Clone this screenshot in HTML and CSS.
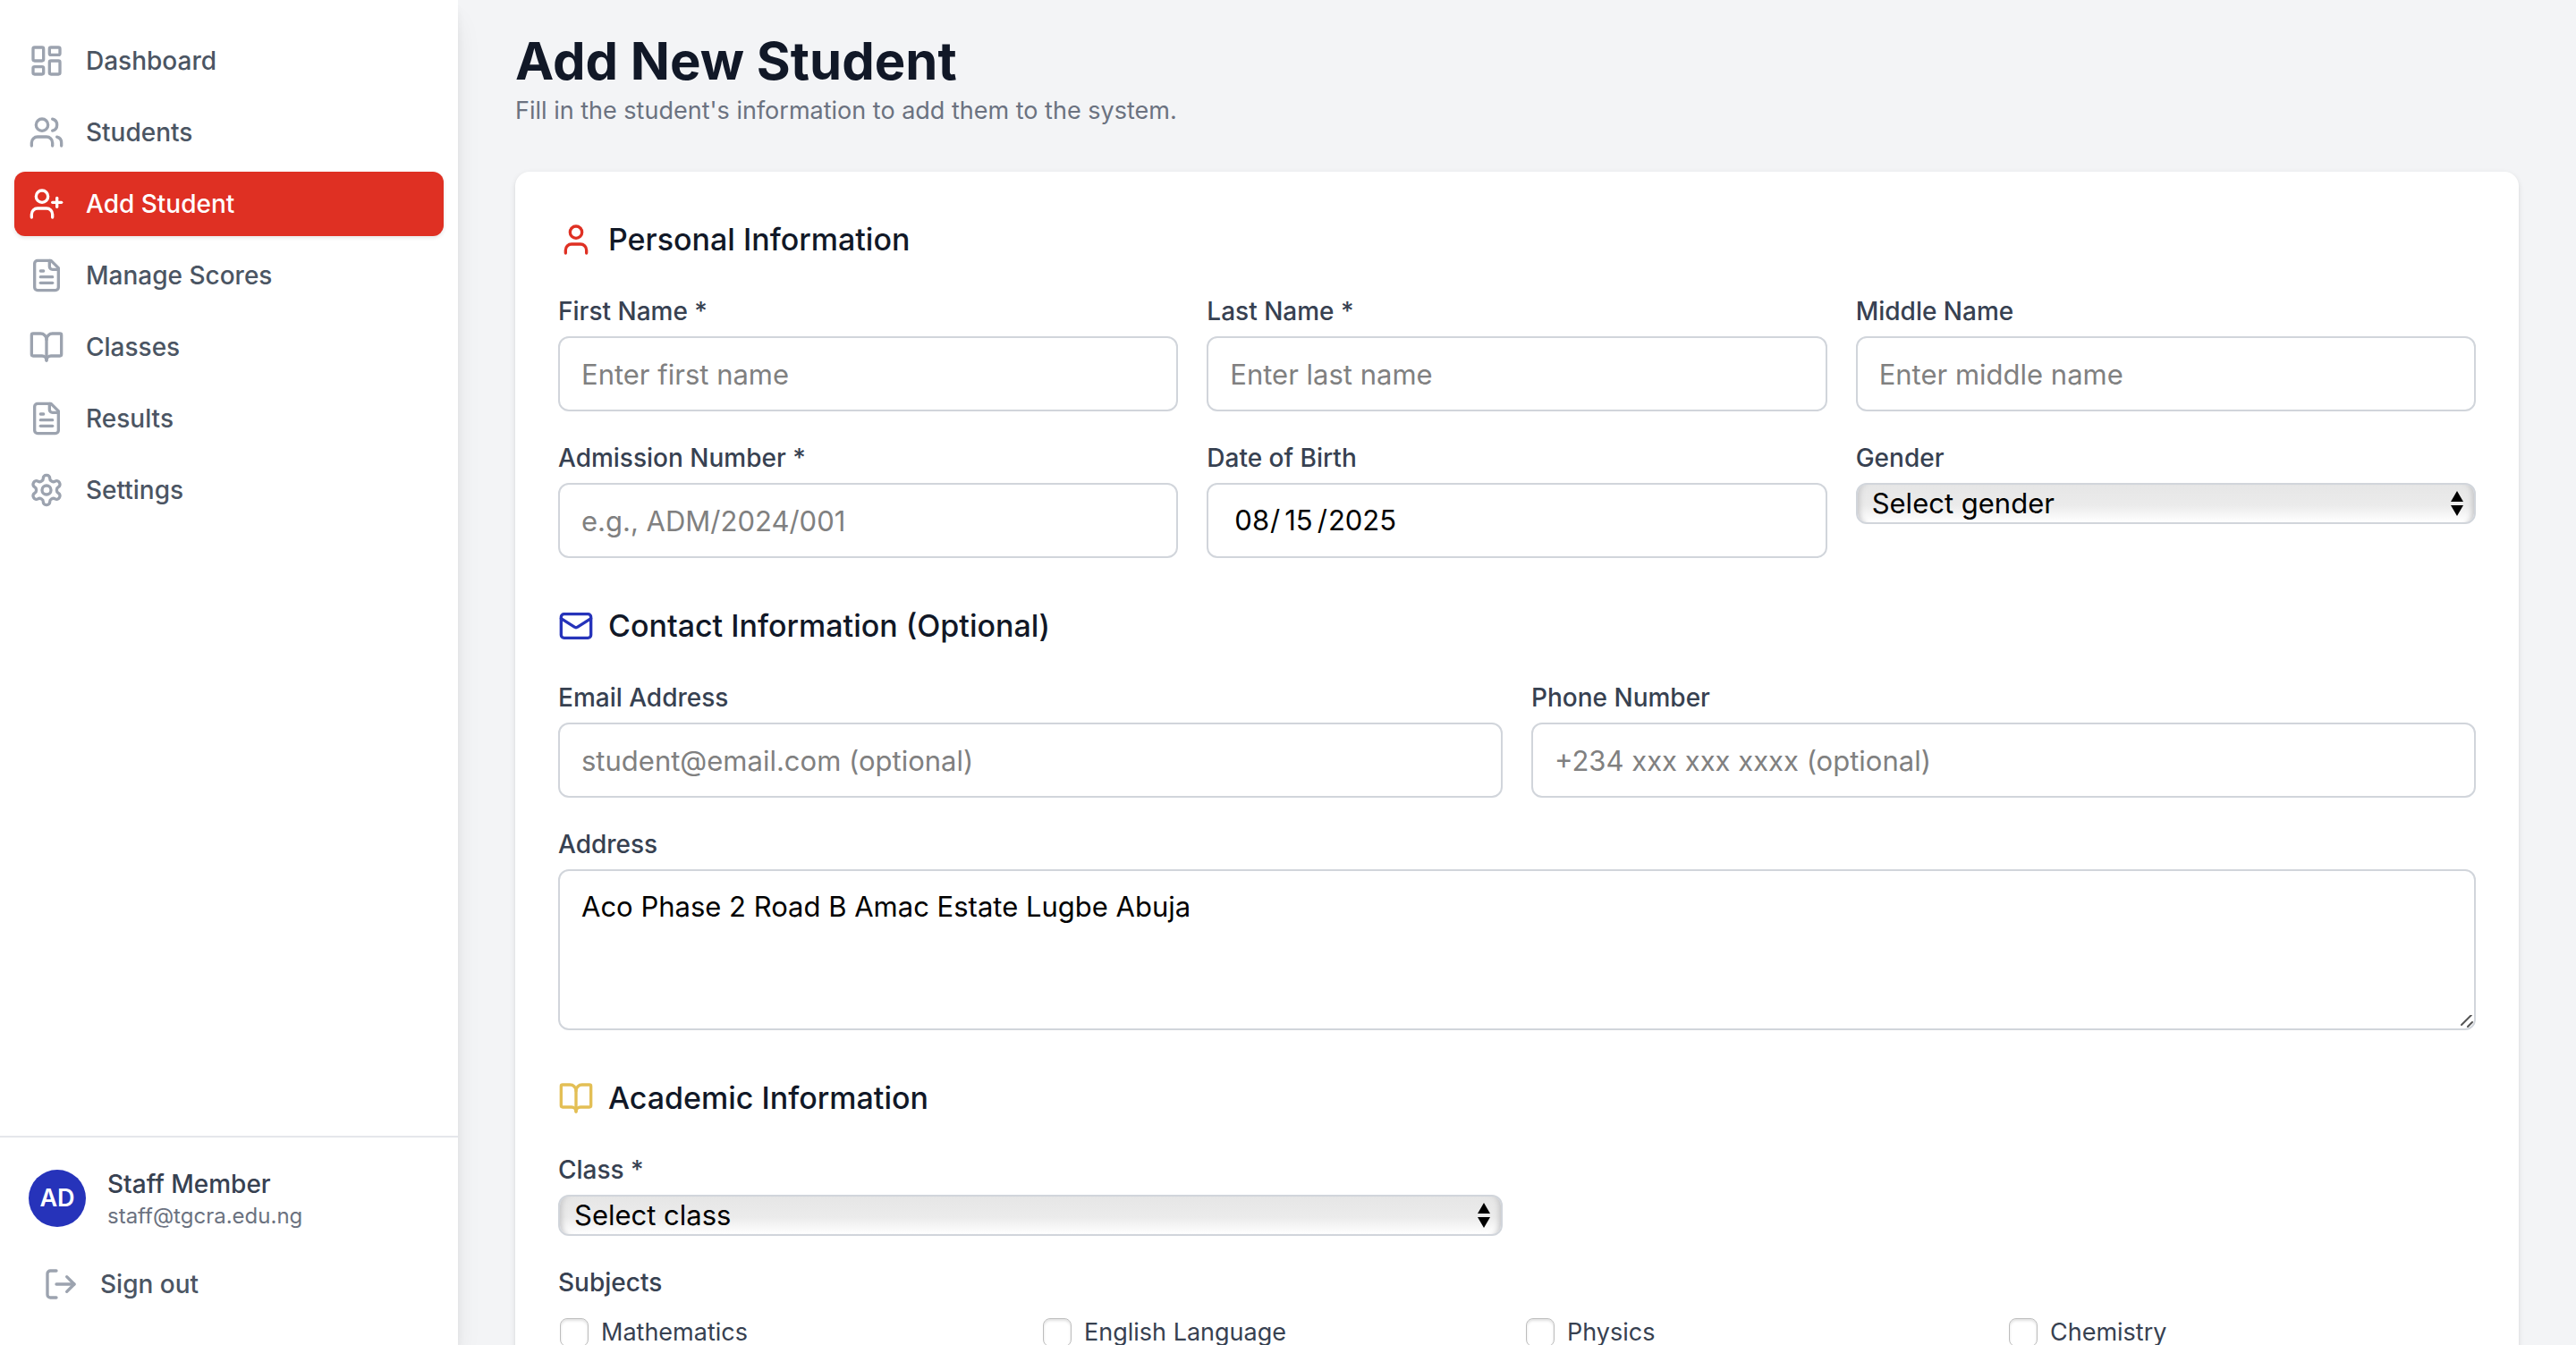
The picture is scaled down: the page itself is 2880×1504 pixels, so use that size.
FILE: index.html
```html
<!DOCTYPE html>
<html lang="en">
<head>
<meta charset="utf-8">
<title>Add New Student</title>
<meta name="viewport" content="width=device-width, initial-scale=1">
<link rel="stylesheet" href="styles.css">
</head>
<body>
<div class="shell">
  <aside class="sidebar">
    <nav class="nav" aria-label="Main">
      <a class="nav-link" href="#dashboard">
        <svg class="icon" viewBox="0 0 24 24" aria-hidden="true"><rect x="3" y="3" width="7" height="9" rx="1"/><rect x="14" y="3" width="7" height="5" rx="1"/><rect x="14" y="12" width="7" height="9" rx="1"/><rect x="3" y="16" width="7" height="5" rx="1"/></svg>
        Dashboard
      </a>
      <a class="nav-link" href="#students">
        <svg class="icon" viewBox="0 0 24 24" aria-hidden="true"><path d="M16 21v-2a4 4 0 0 0-4-4H6a4 4 0 0 0-4 4v2"/><circle cx="9" cy="7" r="4"/><path d="M22 21v-2a4 4 0 0 0-3-3.87"/><path d="M16 3.13a4 4 0 0 1 0 7.75"/></svg>
        Students
      </a>
      <a class="nav-link nav-link-active" href="#add-student" aria-current="page">
        <svg class="icon" viewBox="0 0 24 24" aria-hidden="true"><path d="M16 21v-2a4 4 0 0 0-4-4H6a4 4 0 0 0-4 4v2"/><circle cx="9" cy="7" r="4"/><path d="M19 8v6"/><path d="M22 11h-6"/></svg>
        Add Student
      </a>
      <a class="nav-link" href="#scores">
        <svg class="icon" viewBox="0 0 24 24" aria-hidden="true"><path d="M15 2H6a2 2 0 0 0-2 2v16a2 2 0 0 0 2 2h12a2 2 0 0 0 2-2V7Z"/><path d="M14 2v4a2 2 0 0 0 2 2h4"/><path d="M10 9H8"/><path d="M16 13H8"/><path d="M16 17H8"/></svg>
        Manage Scores
      </a>
      <a class="nav-link" href="#classes">
        <svg class="icon" viewBox="0 0 24 24" aria-hidden="true"><path d="M12 7v14"/><path d="M3 18a1 1 0 0 1-1-1V4a1 1 0 0 1 1-1h5a4 4 0 0 1 4 4 4 4 0 0 1 4-4h5a1 1 0 0 1 1 1v13a1 1 0 0 1-1 1h-6a3 3 0 0 0-3 3 3 3 0 0 0-3-3z"/></svg>
        Classes
      </a>
      <a class="nav-link" href="#results">
        <svg class="icon" viewBox="0 0 24 24" aria-hidden="true"><path d="M15 2H6a2 2 0 0 0-2 2v16a2 2 0 0 0 2 2h12a2 2 0 0 0 2-2V7Z"/><path d="M14 2v4a2 2 0 0 0 2 2h4"/><path d="M10 9H8"/><path d="M16 13H8"/><path d="M16 17H8"/></svg>
        Results
      </a>
      <a class="nav-link" href="#settings">
        <svg class="icon" viewBox="0 0 24 24" aria-hidden="true"><path d="M12.22 2h-.44a2 2 0 0 0-2 2v.18a2 2 0 0 1-1 1.73l-.43.25a2 2 0 0 1-2 0l-.15-.08a2 2 0 0 0-2.73.73l-.22.38a2 2 0 0 0 .73 2.73l.15.1a2 2 0 0 1 1 1.72v.51a2 2 0 0 1-1 1.74l-.15.09a2 2 0 0 0-.73 2.73l.22.38a2 2 0 0 0 2.73.73l.15-.08a2 2 0 0 1 2 0l.43.25a2 2 0 0 1 1 1.73V20a2 2 0 0 0 2 2h.44a2 2 0 0 0 2-2v-.18a2 2 0 0 1 1-1.73l.43-.25a2 2 0 0 1 2 0l.15.08a2 2 0 0 0 2.73-.73l.22-.39a2 2 0 0 0-.73-2.73l-.15-.08a2 2 0 0 1-1-1.74v-.5a2 2 0 0 1 1-1.74l.15-.09a2 2 0 0 0 .73-2.73l-.22-.38a2 2 0 0 0-2.73-.73l-.15.08a2 2 0 0 1-2 0l-.43-.25a2 2 0 0 1-1-1.73V4a2 2 0 0 0-2-2z"/><circle cx="12" cy="12" r="3"/></svg>
        Settings
      </a>
    </nav>
    <div class="account">
      <div class="profile">
        <span class="avatar">AD</span>
        <div>
          <p class="profile-name">Staff Member</p>
          <p class="profile-email">staff@tgcra.edu.ng</p>
        </div>
      </div>
      <button class="sign-out" type="button">
        <svg class="icon" viewBox="0 0 24 24" aria-hidden="true"><path d="M9 21H5a2 2 0 0 1-2-2V5a2 2 0 0 1 2-2h4"/><path d="m16 17 5-5-5-5"/><path d="M21 12H9"/></svg>
        Sign out
      </button>
    </div>
  </aside>

  <main class="main">
    <header class="page-header">
      <h1 class="page-title">Add New Student</h1>
      <p class="page-subtitle">Fill in the student's information to add them to the system.</p>
    </header>

    <form class="card">
      <section class="section">
        <h2 class="section-title">
          <svg class="icon icon-red" viewBox="0 0 24 24" aria-hidden="true"><path d="M19 21v-2a4 4 0 0 0-4-4H9a4 4 0 0 0-4 4v2"/><circle cx="12" cy="7" r="4"/></svg>
          Personal Information
        </h2>
        <div class="grid grid-3">
          <div class="field">
            <label class="label" for="first-name">First Name *</label>
            <input class="input" id="first-name" type="text" placeholder="Enter first name">
          </div>
          <div class="field">
            <label class="label" for="last-name">Last Name *</label>
            <input class="input" id="last-name" type="text" placeholder="Enter last name">
          </div>
          <div class="field">
            <label class="label" for="middle-name">Middle Name</label>
            <input class="input" id="middle-name" type="text" placeholder="Enter middle name">
          </div>
          <div class="field">
            <label class="label" for="admission">Admission Number *</label>
            <input class="input" id="admission" type="text" placeholder="e.g., ADM/2024/001">
          </div>
          <div class="field">
            <label class="label" for="birth">Date of Birth</label>
            <input class="input input-date" id="birth" type="date" value="2025-08-15">
          </div>
          <div class="field">
            <label class="label" for="gender">Gender</label>
            <div class="select-wrap">
              <select class="select" id="gender"><option>Select gender</option><option>Male</option><option>Female</option></select>
              <svg class="select-arrows" viewBox="0 0 14 28" aria-hidden="true"><path d="M7 0l7 12H0zM7 28l7-12H0z"/></svg>
            </div>
          </div>
        </div>
      </section>

      <section class="section">
        <h2 class="section-title">
          <svg class="icon icon-blue" viewBox="0 0 24 24" aria-hidden="true"><rect x="2" y="4" width="20" height="16" rx="2"/><path d="m22 7-8.97 5.7a1.94 1.94 0 0 1-2.06 0L2 7"/></svg>
          Contact Information (Optional)
        </h2>
        <div class="grid grid-2">
          <div class="field">
            <label class="label" for="email">Email Address</label>
            <input class="input" id="email" type="email" placeholder="student@email.com (optional)">
          </div>
          <div class="field">
            <label class="label" for="phone">Phone Number</label>
            <input class="input" id="phone" type="tel" placeholder="+234 xxx xxx xxxx (optional)">
          </div>
          <div class="field field-wide">
            <label class="label" for="address">Address</label>
            <textarea class="input textarea" id="address" rows="3">Aco Phase 2 Road B Amac Estate Lugbe Abuja</textarea>
          </div>
        </div>
      </section>

      <section class="section">
        <h2 class="section-title">
          <svg class="icon icon-gold" viewBox="0 0 24 24" aria-hidden="true"><path d="M12 7v14"/><path d="M3 18a1 1 0 0 1-1-1V4a1 1 0 0 1 1-1h5a4 4 0 0 1 4 4 4 4 0 0 1 4-4h5a1 1 0 0 1 1 1v13a1 1 0 0 1-1 1h-6a3 3 0 0 0-3 3 3 3 0 0 0-3-3z"/></svg>
          Academic Information
        </h2>
        <div class="grid grid-2">
          <div class="field">
            <label class="label" for="class">Class *</label>
            <div class="select-wrap">
              <select class="select" id="class"><option>Select class</option></select>
              <svg class="select-arrows" viewBox="0 0 14 28" aria-hidden="true"><path d="M7 0l7 12H0zM7 28l7-12H0z"/></svg>
            </div>
          </div>
        </div>
        <fieldset class="subjects">
          <legend class="label subjects-legend">Subjects</legend>
          <div class="grid-4">
            <label class="check"><input class="checkbox" type="checkbox">Mathematics</label>
            <label class="check"><input class="checkbox" type="checkbox">English Language</label>
            <label class="check"><input class="checkbox" type="checkbox">Physics</label>
            <label class="check"><input class="checkbox" type="checkbox">Chemistry</label>
          </div>
        </fieldset>
      </section>
    </form>
  </main>
</div>
</body>
</html>
```

FILE: styles.css
```css
* { box-sizing: border-box; }

body {
  margin: 0;
  background: #f3f4f6;
  color: #111827;
  font-family: Inter, "Liberation Sans", sans-serif;
  font-size: 28px;
  line-height: 40px;
}

h1, h2, p { margin: 0; }

button, input, select, textarea { font-family: inherit; }

.shell { display: flex; height: 100vh; }

.icon {
  width: 40px;
  height: 40px;
  flex: none;
  fill: none;
  stroke: #9ca3af;
  stroke-width: 2;
  stroke-linecap: round;
  stroke-linejoin: round;
}
.icon-red { stroke: #df3023; }
.icon-blue { stroke: #2633ba; }
.icon-gold { stroke: #e3bf55; }

/* Sidebar */
.sidebar {
  position: relative;
  z-index: 1;
  display: flex;
  flex: none;
  flex-direction: column;
  justify-content: space-between;
  width: 512px;
  background: #fff;
  box-shadow: 0 20px 30px -6px rgba(0, 0, 0, 0.1), 0 8px 12px -4px rgba(0, 0, 0, 0.1);
}
.nav {
  display: flex;
  flex-direction: column;
  gap: 8px;
  padding: 32px 16px;
}
.nav-link, .sign-out {
  display: flex;
  align-items: center;
  gap: 24px;
  padding: 16px;
  border-radius: 12px;
  color: #4b5563;
  font-size: 28px;
  font-weight: 500;
  line-height: 40px;
  text-decoration: none;
}
.nav-link-active {
  background: #df3023;
  color: #fff;
  box-shadow: 0 2px 4px rgba(0, 0, 0, 0.1);
}
.nav-link-active .icon { stroke: #fff; }

.account {
  display: flex;
  flex-direction: column;
  gap: 24px;
  padding: 32px;
  border-top: 2px solid #e5e7eb;
}
.profile { display: flex; align-items: center; gap: 24px; }
.avatar {
  display: flex;
  align-items: center;
  justify-content: center;
  width: 64px;
  height: 64px;
  border-radius: 50%;
  background: #2633ba;
  color: #fff;
  font-size: 27px;
  font-weight: 600;
}
.profile-name { color: #374151; font-weight: 500; }
.profile-email { color: #6b7280; font-size: 24px; line-height: 32px; }
.sign-out { border: 0; background: none; }

/* Page */
.main {
  flex: 1;
  min-width: 0;
  padding: 32px 64px;
  overflow-y: auto;
  scrollbar-width: none;
}
.page-header { margin-bottom: 48px; }
.page-title { font-size: 58px; font-weight: 700; line-height: 72px; }
.page-subtitle { color: #6b7280; font-size: 27px; }

.card {
  display: flex;
  flex-direction: column;
  gap: 48px;
  padding: 48px;
  border-radius: 16px;
  background: #fff;
  box-shadow: 0 2px 6px rgba(0, 0, 0, 0.1), 0 2px 4px -2px rgba(0, 0, 0, 0.1);
}
.section-title {
  display: flex;
  align-items: center;
  gap: 16px;
  margin-bottom: 32px;
  font-size: 34px;
  font-weight: 500;
  line-height: 56px;
}

.grid { display: grid; gap: 32px; }
.grid-2 { grid-template-columns: repeat(2, minmax(0, 1fr)); }
.grid-3 { grid-template-columns: repeat(3, minmax(0, 1fr)); }
.grid-4 { display: grid; grid-template-columns: repeat(4, minmax(0, 1fr)); gap: 16px; }
.field { display: flex; flex-direction: column; gap: 8px; }
.field-wide { grid-column: 1 / -1; }
.label { color: #374151; font-weight: 500; }

.input {
  width: 100%;
  height: 84px;
  padding: 16px 24px;
  border: 2px solid #d1d5db;
  border-radius: 12px;
  background: #fff;
  color: #000;
  font-size: 31px;
  line-height: 48px;
}
.input::placeholder { color: #808080; opacity: 1; }
.input-date { padding-left: 28px; }
.input-date::-webkit-calendar-picker-indicator { display: none; }
.input-date::-webkit-datetime-edit-day-field { padding: 0 5px; }
.textarea { height: 180px; resize: vertical; }
.textarea::-webkit-resizer {
  background: url("data:image/svg+xml,%3Csvg xmlns='http://www.w3.org/2000/svg' viewBox='0 0 15 15'%3E%3Cpath d='M1 11 12 0M8 13l5-5' stroke='%23555' stroke-width='2' stroke-linecap='round'/%3E%3C/svg%3E") no-repeat;
}

.select-wrap { position: relative; display: flex; }
.select {
  width: 100%;
  height: 46px;
  padding: 0 40px 0 16px;
  border: 2px solid #d1d5db;
  border-radius: 12px;
  appearance: none;
  background: linear-gradient(#e6e6e6, #ebebeb 55%, #fff);
  box-shadow: inset 8px 0 6px -6px #c4c4c6, inset -8px 0 6px -6px #c4c4c6;
  color: #000;
  font-size: 31px;
  line-height: 40px;
}
.select-arrows {
  position: absolute;
  top: 9px;
  right: 14px;
  width: 14px;
  height: 28px;
  pointer-events: none;
}

.subjects { min-width: 0; margin: 32px 0 0; padding: 0; border: 0; }
.subjects-legend { margin-bottom: 16px; padding: 0; }
.check { display: flex; align-items: center; gap: 14px; color: #374151; font-size: 27px; }
.checkbox {
  width: 32px;
  height: 32px;
  margin: 0 0 0 2px;
  border: 1px solid #bdbdbd;
  border-radius: 8px;
  appearance: none;
  background: #fff;
  box-shadow: inset 0 2px 3px rgba(0, 0, 0, 0.12);
}
.checkbox:checked { border-color: #2633ba; background: #2633ba; }
```
